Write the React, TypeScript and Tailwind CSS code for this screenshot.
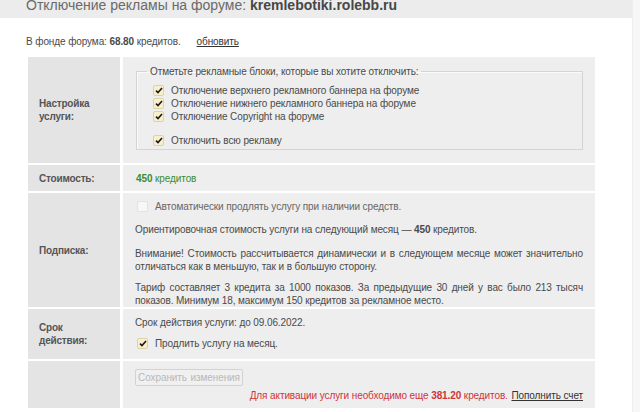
import React from "react";

// Страница отключения рекламы на форуме — таблица настроек услуги.

const FONT = { fontFamily: '"Liberation Sans", Arial, sans-serif' };

function Check({ checked }: { checked: boolean }) {
  if (!checked) {
    return <span className="inline-block h-[11px] w-[11px] shrink-0 rounded-[2px] border border-[#e2e2e2] bg-[#f8f8f8]" />;
  }
  return (
    <span className="inline-flex h-[11px] w-[11px] shrink-0 items-center justify-center rounded-[2px] border border-[#dcd2a8] bg-[#f9efcc]">
      <svg width="8" height="7" viewBox="0 0 8 7" aria-hidden="true">
        <path d="M1 3.6 L3 5.6 L7 1" fill="none" stroke="#1a1a1a" strokeWidth="1.6" />
      </svg>
    </span>
  );
}

function Option({ checked, children }: { checked: boolean; children: React.ReactNode }) {
  return (
    <div className="flex h-[13px] items-center gap-[7px]">
      <Check checked={checked} />
      <span>{children}</span>
    </div>
  );
}

// строка, растянутая по ширине (как в исходной вёрстке с text-align: justify)
function J({ children, last }: { children: React.ReactNode; last?: boolean }) {
  return (
    <div className={last ? "whitespace-nowrap text-left" : "whitespace-nowrap text-justify [text-align-last:justify]"}>
      {children}
    </div>
  );
}

function Label({ children }: { children: React.ReactNode }) {
  return (
    <div className="flex items-center bg-[#e4e4e4] pl-[11px] text-[10px] font-bold leading-[13px] tracking-[-0.2px] text-[#555]">
      {children}
    </div>
  );
}

export default function App() {
  return (
    <div
      className="flex h-[412px] w-[640px] overflow-hidden bg-white text-[10px] tracking-[-0.1px] text-[#4a4a4a]"
      style={FONT}
    >
      <div className="flex-1">
        {/* ── Заголовок ───────────────────────────────────────────── */}
        <div className="h-[18px] overflow-hidden bg-[#ececec] pl-[26px]">
          <div className="mt-[-3px] whitespace-nowrap text-[14px] leading-[17px] tracking-normal text-[#6a6a6a]">
            Отключение рекламы на форуме: <b className="text-[#474747]">kremlebotiki.rolebb.ru</b>
          </div>
        </div>

        {/* ── Баланс ──────────────────────────────────────────────── */}
        <div className="mt-[17px] pl-[26px] leading-[13px]">
          В фонде форума: <b>68.80</b> кредитов.
          <a className="ml-[16px] text-[#333] underline">обновить</a>
        </div>

        {/* ── Таблица ─────────────────────────────────────────────── */}
        <div className="ml-[28px] mt-[9px] grid w-[567px] grid-cols-[92px_472px] gap-x-[3px] gap-y-[2px] leading-[13px]">
          {/* Настройка услуги */}
          <Label>
            Настройка
            <br />
            услуги:
          </Label>
          <div className="h-[106px] bg-[#eeeeee] pl-[13px] pr-[12px] pt-[8px]">
            <fieldset className="h-[85px] border border-[#d4d4d4] pl-[16px] shadow-[inset_1px_1px_0_#fafafa]">
              <legend className="ml-[-6px] px-[3px]">Отметьте рекламные блоки, которые вы хотите отключить:</legend>
              <div className="mt-[6px]">
                <Option checked>Отключение верхнего рекламного баннера на форуме</Option>
                <Option checked>Отключение нижнего рекламного баннера на форуме</Option>
                <Option checked>Отключение Copyright на форуме</Option>
                <div className="mt-[11px]">
                  <Option checked>Отключить всю рекламу</Option>
                </div>
              </div>
            </fieldset>
          </div>

          {/* Стоимость */}
          <Label>Стоимость:</Label>
          <div className="flex h-[26px] items-center bg-[#eeeeee] pl-[13px] text-[#3d8b2f]">
            <b>450</b>&nbsp;кредитов
          </div>

          {/* Подписка */}
          <Label>Подписка:</Label>
          <div className="h-[114px] bg-[#eeeeee] pl-[12px] pr-[12px] pt-[7px]">
            <div className="pl-[2px] text-[#666]">
              <Option checked={false}>Автоматически продлять услугу при наличии средств.</Option>
            </div>
            <div className="mt-[10px]">
              Ориентировочная стоимость услуги на следующий месяц — <b>450</b> кредитов.
            </div>
            <div className="mt-[11px]">
              <J>Внимание! Стоимость рассчитывается динамически и в следующем месяце может значительно</J>
              <J last>отличаться как в меньшую, так и в большую сторону.</J>
            </div>
            <div className="mt-[8px]">
              <J>Тариф составляет 3 кредита за 1000 показов. За предыдущие 30 дней у вас было 213 тысяч</J>
              <J last>показов. Минимум 18, максимум 150 кредитов за рекламное место.</J>
            </div>
          </div>

          {/* Срок действия */}
          <Label>
            Срок
            <br />
            действия:
          </Label>
          <div className="h-[50px] bg-[#eeeeee] pl-[12px] pt-[7px]">
            <div>Срок действия услуги: до 09.06.2022.</div>
            <div className="mt-[8px] pl-[2px]">
              <Option checked>Продлить услугу на месяц.</Option>
            </div>
          </div>

          {/* Сохранение */}
          <div className="bg-[#e4e4e4]" />
          <div className="flex h-[47px] flex-col bg-[#eeeeee] pl-[12px] pr-[12px] pt-[8px]">
            <button
              disabled
              className="h-[17px] w-[108px] whitespace-nowrap rounded-[2px] border border-[#d2d2d2] bg-[#f0f0f0] text-[10px] leading-[15px] text-[#b8b8b8] [word-spacing:1px]"
            >
              Сохранить изменения
            </button>
            <div className="mt-[3px] text-right text-[#d0343a]">
              Для активации услуги необходимо еще <b>381.20</b> кредитов.{" "}
              <a className="ml-[1px] text-[#333] underline">Пополнить счет</a>
            </div>
          </div>
        </div>
      </div>

      {/* полоса прокрутки справа */}
      <div className="w-[8px] border-l border-[#eeeeee] bg-[#f7f7f7]" />
    </div>
  );
}
